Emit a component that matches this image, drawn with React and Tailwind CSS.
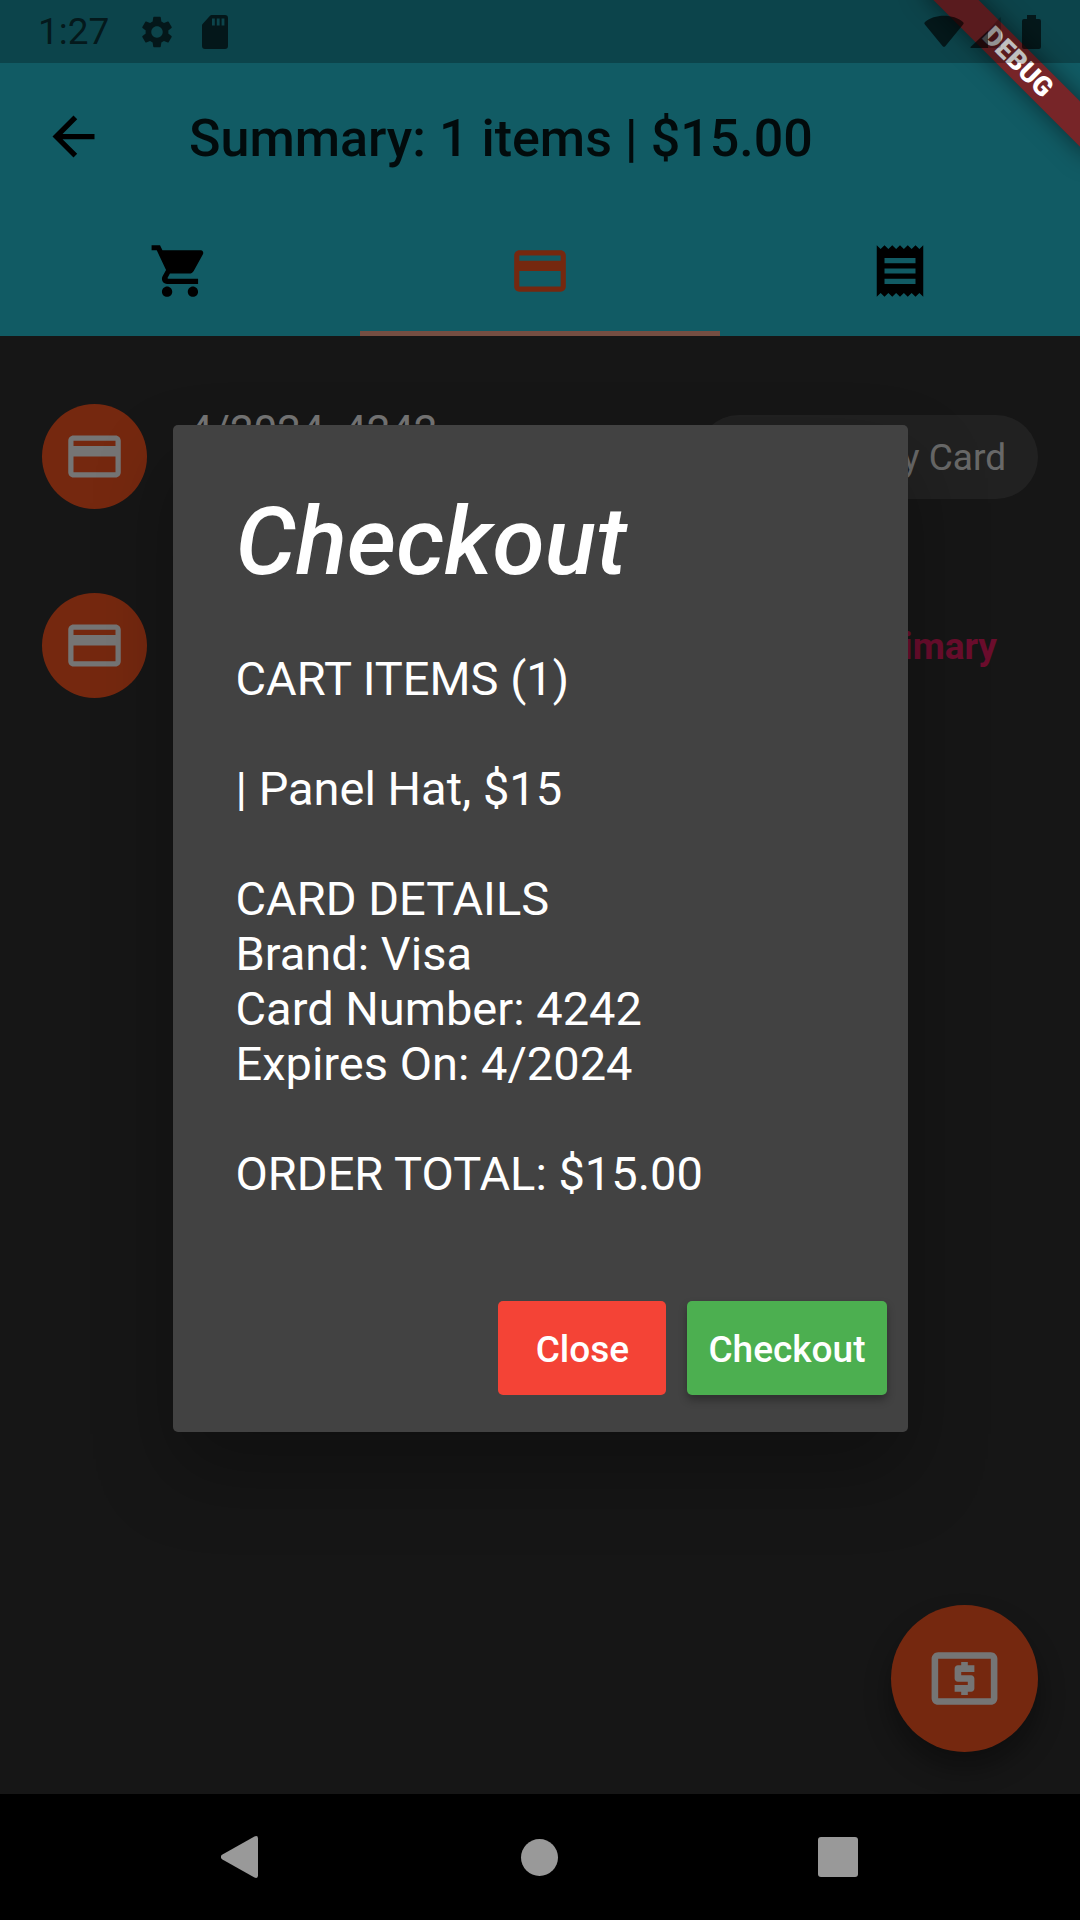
import React from "react";
import {
  MdArrowBack,
  MdCreditCard,
  MdLocalAtm,
  MdReceipt,
  MdSettings,
  MdShoppingCart,
} from "react-icons/md";

function StatusBar() {
  return (
    <div className="relative z-30 flex h-[63px] items-center justify-between bg-black/25 pr-[39px] pl-[38px] text-black/65">
      <div className="flex items-center">
        <span className="text-[37px] leading-[43px]">1:27</span>
        <MdSettings className="ml-[29px] size-[38px]" aria-hidden="true" />
        <svg className="ml-[26px] h-[34px] w-[26px]" viewBox="0 0 26 34" aria-hidden="true">
          <path
            fill="currentColor"
            fillRule="evenodd"
            d="M9.500 0H23a3 3 0 0 1 3 3v28a3 3 0 0 1-3 3H3a3 3 0 0 1-3-3V10.500Q0 9.500.8 8.700L8 .8Q8.700 0 9.500 0ZM10 3.500v7h2.800v-7Zm4.800 0v7h2.800v-7Zm4.800 0v7h2.800v-7Z"
          />
        </svg>
      </div>
      <div className="flex items-center">
        <svg className="h-[34px] w-10" viewBox="0 0 40 34" aria-hidden="true">
          <path
            fill="currentColor"
            d="M.9 9.500Q-.3 8.300 1 7.100C6 3 12.500.8 20 .8S34 3 39 7.100q1.300 1.200.1 2.400L21.500 31q-1.500 1.700-3 0Z"
          />
        </svg>
        <svg className="ml-1.5 h-[34px] w-8" viewBox="0 0 32 34" aria-hidden="true">
          <path fill="currentColor" opacity=".35" d="M18 15.500 29.500 3Q31 1.500 31 3.500V31q0 2-2 2H18Z" />
          <path fill="currentColor" d="M18 15.500V33H2Q-.5 33 1 31.500Z" />
        </svg>
        <svg className="ml-5 h-[34px] w-[19px]" viewBox="0 0 19 34" aria-hidden="true">
          <path
            fill="currentColor"
            d="M5 0h9v4h3a2 2 0 0 1 2 2v26a2 2 0 0 1-2 2H2a2 2 0 0 1-2-2V6a2 2 0 0 1 2-2h3Z"
          />
        </svg>
      </div>
    </div>
  );
}

function DebugRibbon() {
  return (
    <div className="pointer-events-none absolute top-0 right-0 z-20 size-[200px] overflow-hidden">
      <div className="absolute top-[46px] left-[18px] h-8 w-60 rotate-45 bg-[#772528] text-center text-[27px] leading-8 font-black text-white shadow-[0_0_24px_rgba(0,0,0,0.5)]">
        DEBUG
      </div>
    </div>
  );
}

const tabs = [
  { label: "Cart", Icon: MdShoppingCart, active: false },
  { label: "Cards", Icon: MdCreditCard, active: true },
  { label: "Orders", Icon: MdReceipt, active: false },
];

function TabBar() {
  return (
    <div role="tablist" className="grid grid-cols-3">
      {tabs.map(({ label, Icon, active }) => (
        <button
          key={label}
          type="button"
          role="tab"
          aria-selected={active}
          aria-label={label}
          className={
            active
              ? "flex h-[126px] items-center justify-center border-b-5 border-[#ffab91] text-[#ff5722]"
              : "flex h-[126px] items-center justify-center border-b-5 border-transparent text-black"
          }
        >
          <Icon className="size-[62px]" />
        </button>
      ))}
    </div>
  );
}

function CardRow({ title, brand, children }) {
  return (
    <li className="flex h-[189px] items-center px-[42px]">
      <span className="flex size-[105px] shrink-0 items-center justify-center rounded-full bg-[#ff5722] text-white">
        <MdCreditCard className="size-[63px]" aria-hidden="true" />
      </span>
      <div className="ml-[42px] min-w-0 grow">
        <p className="text-[42px] leading-[52px] text-white">{title}</p>
        <p className="text-[37px] leading-[52px] text-white/70">{brand}</p>
      </div>
      {children}
    </li>
  );
}

function CheckoutDialog() {
  return (
    <div className="absolute inset-0 z-10 flex items-center justify-center bg-black/54 pt-[63px] pb-[126px]">
      <div
        role="dialog"
        aria-modal="true"
        aria-labelledby="checkout-title"
        className="w-[735px] max-w-full rounded-[5px] bg-[#424242] text-white shadow-[0_40px_80px_rgba(0,0,0,0.28)]"
      >
        <h2
          id="checkout-title"
          className="px-[63px] pt-[62px] text-[95px] leading-[110px] font-medium italic"
        >
          Checkout
        </h2>
        <div className="flex flex-col gap-[55px] px-[63px] pt-[54px] pb-[63px] text-[47px] leading-[55px]">
          <p>CART ITEMS (1)</p>
          <p>| Panel Hat, $15</p>
          <div>
            <p>CARD DETAILS</p>
            <p>Brand: Visa</p>
            <p>Card Number: 4242</p>
            <p>Expires On: 4/2024</p>
          </div>
          <p>ORDER TOTAL: $15.00</p>
        </div>
        <div className="flex justify-end gap-[21px] px-[21px] py-[37px] text-[37px] leading-[43px] font-medium">
          <button type="button" className="h-[94px] w-[168px] rounded-[5px] bg-[#f44336] pt-0.5">
            Close
          </button>
          <button
            type="button"
            className="h-[94px] rounded-[5px] bg-[#4caf50] px-[21px] pt-0.5 shadow-[0_5px_8px_rgba(0,0,0,0.3)]"
          >
            Checkout
          </button>
        </div>
      </div>
    </div>
  );
}

function NavigationBar() {
  return (
    <nav className="relative z-30 flex h-[126px] items-center justify-center gap-[235px] bg-black pr-0.5 text-[#999999]">
      <button type="button" aria-label="Back" className="flex size-16 items-center justify-center">
        <svg className="h-[42px] w-[38px]" viewBox="0 0 38 42" aria-hidden="true">
          <path
            fill="currentColor"
            d="M33 .7Q37-1.200 37 2.500v37q0 3.700-4 1.800L1 23.200Q-1.700 21 1 18.800Z"
          />
        </svg>
      </button>
      <button type="button" aria-label="Home" className="flex size-16 items-center justify-center">
        <span className="size-[37px] rounded-full bg-current" />
      </button>
      <button type="button" aria-label="Recents" className="flex size-16 items-center justify-center">
        <span className="size-10 rounded-[3px] bg-current" />
      </button>
    </nav>
  );
}

export default function App() {
  return (
    <div className="relative flex min-h-screen flex-col overflow-hidden bg-[#303030] font-[Roboto,sans-serif]">
      <header className="bg-[#26c6da]">
        <StatusBar />
        <div className="flex h-[147px] items-center pl-[42px]">
          <button type="button" aria-label="Back" className="text-black">
            <MdArrowBack className="size-[63px]" />
          </button>
          <h1 className="ml-[84px] pt-1 text-[52px] leading-[62px] font-medium text-black/87">
            Summary: 1 items | $15.00
          </h1>
        </div>
        <TabBar />
      </header>

      <main className="flex grow flex-col pt-[26px]">
        <ul>
          <CardRow title="4/2024, 4242" brand="Visa">
            <button
              type="button"
              className="h-[84px] shrink-0 rounded-full bg-white/12 px-8 pt-0.5 text-[37px] leading-[43px] text-white/87"
            >
              Set Primary Card
            </button>
          </CardRow>
          <CardRow title="4/2024, 4242" brand="Visa">
            <span className="shrink-0 pt-0.5 pr-[41px] text-[37px] leading-[43px] font-bold text-[#e91e63]">
              Primary
            </span>
          </CardRow>
        </ul>
        <button
          type="button"
          aria-label="Pay"
          className="mt-auto mr-[42px] mb-[42px] flex size-[147px] items-center justify-center self-end rounded-full bg-[#ff5722] text-white shadow-[0_16px_26px_rgba(0,0,0,0.35)]"
        >
          <MdLocalAtm className="size-[79px]" />
        </button>
      </main>

      <NavigationBar />
      <CheckoutDialog />
      <DebugRibbon />
    </div>
  );
}
